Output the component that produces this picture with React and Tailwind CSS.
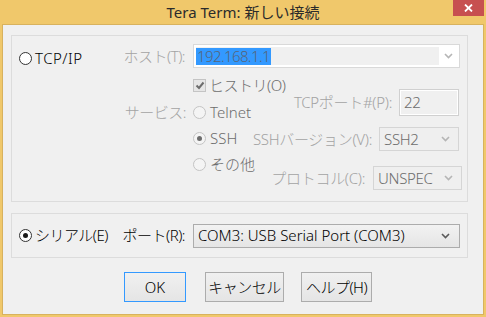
import React from "react";

const FONT = "font-['Noto_Sans','Noto_Sans_CJK_JP',sans-serif]";

const Chevron = ({ className = "" }) => (
  <svg width="9" height="6" viewBox="0 0 9 6" className={className}>
    <path d="M1 1 L4.5 4.5 L8 1" fill="none" stroke="currentColor" strokeWidth="1.6" />
  </svg>
);

const Radio = ({ checked, disabled }) => (
  <span
    className={`w-[13px] h-[13px] shrink-0 rounded-full border flex items-center justify-center ${
      disabled ? "border-[#c4c4c4] bg-[#f4f4f4]" : "border-[#333333] bg-white"
    }`}
  >
    {checked && (
      <span className={`w-[5px] h-[5px] rounded-full ${disabled ? "bg-[#6d6d6d]" : "bg-[#1a1a1a]"}`} />
    )}
  </span>
);

const DisabledSelect = ({ value, width }) => (
  <div className={`${width} shrink-0 h-full border border-[#d5d5d5] bg-[#efefef] flex items-center justify-between pl-[4px] pr-[8px] text-[#6d6d6d]`}>
    <span>{value}</span>
    <Chevron className="text-[#b5b5b5]" />
  </div>
);

export default function App() {
  return (
    <div className={`w-[486px] h-[317px] bg-[#f0c86b] flex flex-col px-[2px] pb-[2px] text-[15px] font-light leading-none ${FONT}`}>
      {/* Title bar */}
      <div className="h-[24px] relative flex items-center justify-center text-[#2b2b2b] text-[15px] font-normal">
        Tera Term: 新しい接続
        <div className="absolute right-0 top-0 w-[31px] h-[16px] bg-[#c75050] flex items-center justify-center">
          <svg width="9" height="8" viewBox="0 0 9 8">
            <path d="M1 0.5 L8 7.5 M8 0.5 L1 7.5" stroke="#fff" strokeWidth="1.8" />
          </svg>
        </div>
      </div>

      {/* Dialog body */}
      <div className="flex-1 border border-[#d8b25e] bg-[#f0f0f0] flex flex-col">
        {/* TCP/IP group */}
        <div className="ml-[8px] mt-[10px] w-[457px] h-[167px] border border-[#dcdcdc] flex">
          <div className="w-[103px] shrink-0 pl-[7px] pt-[14px]">
            <div className="flex items-center gap-[3px] h-[16px] text-black">
              <Radio />
              <span className="tracking-[0.5px]">TCP/IP</span>
            </div>
          </div>

          <div className="flex-1 min-w-0 flex flex-col">
            {/* Host */}
            <div className="mt-[8px] h-[24px] flex items-center">
              <span className="w-[78px] shrink-0 pr-[8px] text-right text-[#a3a3a3] whitespace-nowrap tracking-[-0.5px]">ホスト(T):</span>
              <div className="w-[267px] h-full border border-[#d9d9d9] bg-white p-[2px] flex">
                <div className="flex-1 bg-[#f0f0f0] flex items-center">
                  <span className="bg-[#3399ff] text-[#56657a] h-[17px] px-[1px] flex items-center tracking-[-0.6px]">192.168.1.1</span>
                </div>
                <div className="w-[18px] flex items-center justify-center">
                  <Chevron className="text-[#b5b5b5]" />
                </div>
              </div>
            </div>

            <div className="flex">
              {/* Service options */}
              <div className="w-[130px] shrink-0 flex flex-col text-[#6d6d6d]">
                <div className="mt-[10px] h-[14px] flex items-center">
                  <span className="w-[78px] shrink-0" />
                  <span className="w-[13px] h-[13px] shrink-0 border border-[#c4c4c4] bg-[#e6e6e6] flex items-center justify-center">
                    <svg width="10" height="9" viewBox="0 0 10 9">
                      <path d="M1.5 4.5 L4 7 L8.5 1.5" fill="none" stroke="#6d6d6d" strokeWidth="2" />
                    </svg>
                  </span>
                  <span className="ml-[3px] whitespace-nowrap tracking-[-0.5px]">ヒストリ(O)</span>
                </div>
                <div className="mt-[7px] h-[26px] flex items-center">
                  <span className="w-[78px] shrink-0 pr-[7px] text-right text-[#a3a3a3] whitespace-nowrap tracking-[-0.5px]">サービス:</span>
                  <Radio disabled />
                  <span className="ml-[4px]">Telnet</span>
                </div>
                <div className="h-[26px] flex items-center">
                  <span className="w-[78px] shrink-0" />
                  <Radio disabled checked />
                  <span className="ml-[4px]">SSH</span>
                </div>
                <div className="h-[26px] flex items-center">
                  <span className="w-[78px] shrink-0" />
                  <Radio disabled />
                  <span className="ml-[4px] whitespace-nowrap">その他</span>
                </div>
              </div>

              {/* Right settings */}
              <div className="flex-1 min-w-0 pr-[8px] flex flex-col items-end text-[#a3a3a3] tracking-[-0.3px]">
                <div className="mt-[21px] h-[27px] flex items-center gap-[7px]">
                  <span className="whitespace-nowrap">TCPポート#(P):</span>
                  <div className="w-[60px] shrink-0 h-full border border-[#d0d0d0] bg-[#f0f0f0] shadow-[inset_0_0_0_1px_#ffffff] flex items-center pl-[4px] text-[#6d6d6d]">
                    22
                  </div>
                </div>
                <div className="mt-[11px] h-[24px] flex items-center gap-[7px]">
                  <span className="whitespace-nowrap">SSHバージョン(V):</span>
                  <DisabledSelect value="SSH2" width="w-[80px]" />
                </div>
                <div className="mt-[15px] mr-[-3px] h-[24px] flex items-center gap-[8px]">
                  <span className="whitespace-nowrap">プロトコル(C):</span>
                  <DisabledSelect value="UNSPEC" width="w-[89px]" />
                </div>
              </div>
            </div>
          </div>
        </div>

        {/* Serial group */}
        <div className="ml-[8px] mt-[11px] w-[457px] h-[45px] border border-[#dcdcdc] flex items-center text-black">
          <div className="w-[103px] shrink-0 pl-[7px] flex items-center gap-[3px]">
            <Radio checked />
            <span className="whitespace-nowrap tracking-[-0.5px]">シリアル(E)</span>
          </div>
          <span className="w-[78px] shrink-0 pr-[8px] text-right whitespace-nowrap tracking-[-0.5px]">ポート(R):</span>
          <div className="w-[267px] h-[24px] border border-[#acacac] bg-gradient-to-b from-[#f2f2f2] to-[#e5e5e5] flex items-center justify-between pl-[4px] pr-[9px]">
            <span className="whitespace-nowrap">COM3: USB Serial Port (COM3)</span>
            <Chevron className="text-[#5a5a5a]" />
          </div>
        </div>

        {/* Buttons */}
        <div className="mt-[14px] flex text-black">
          <button className="ml-[121px] w-[62px] h-[30px] border border-[#3399ff] bg-gradient-to-b from-[#f0f0f0] to-[#e5e5e5] flex items-center justify-center">
            OK
          </button>
          <button className="ml-[19px] w-[79px] h-[30px] border border-[#acacac] bg-gradient-to-b from-[#f0f0f0] to-[#e5e5e5] flex items-center justify-center whitespace-nowrap tracking-[-0.5px]">
            キャンセル
          </button>
          <button className="ml-[17px] w-[71px] h-[30px] border border-[#acacac] bg-gradient-to-b from-[#f0f0f0] to-[#e5e5e5] flex items-center justify-center whitespace-nowrap tracking-[-0.5px]">
            ヘルプ(H)
          </button>
        </div>
      </div>
    </div>
  );
}
